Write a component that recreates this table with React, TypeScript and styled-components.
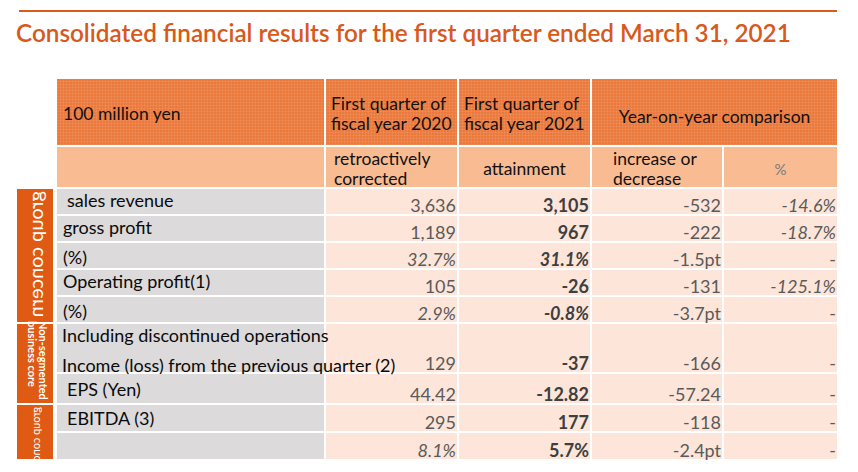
import React from "react";
import styled, { createGlobalStyle } from "styled-components";

const Global = createGlobalStyle`
  html, body { margin: 0; padding: 0; background: #ffffff; }
  body { font-family: Lato, "Liberation Sans", sans-serif; }
`;

const Page = styled.div`
  width: 858px;
  height: 472px;
  overflow: hidden;
  background: #ffffff;
`;

const Rule = styled.div`
  margin: 10px 21px 0 19px;
  height: 2px;
  background: #d85a1c;
`;

const Title = styled.h1`
  margin: 6px 0 0 16px;
  font-family: Lato, "Liberation Sans", sans-serif;
  font-size: 24.3px;
  line-height: 29px;
  font-weight: 600;
  color: #d9581b;
  white-space: nowrap;
`;

const Grid = styled.div`
  display: grid;
  margin: 32px 0 0 17px;
  grid-template-columns: 38px 267px 131px 131px 130px 113px;
  grid-template-rows: 66px 40px 25px 25px 25px 25px 25px 48px 29px 26px 26px;
  column-gap: 2px;
  row-gap: 2px;
  font-family: Lato, "Liberation Sans", sans-serif;
`;

const Spacer = styled.div``;

const HeadCell = styled.div<{ $span?: number; $align?: "left" | "center"; $pad?: number }>`
  grid-column: span ${(p) => p.$span ?? 1};
  background-color: #eb793c;
  background-image: repeating-linear-gradient(0deg, rgba(255, 255, 255, 0.08) 0 1px, transparent 1px 3px),
    repeating-linear-gradient(90deg, rgba(255, 255, 255, 0.08) 0 1px, transparent 1px 3px);
  color: #111111;
  font-size: 17.5px;
  line-height: 20px;
  display: flex;
  flex-direction: column;
  justify-content: center;
  align-items: ${(p) => (p.$align === "center" ? "center" : "flex-start")};
  padding-left: ${(p) => p.$pad ?? 0}px;
  padding-top: ${(p) => (p.$align === "center" ? 10 : 3)}px;
  white-space: nowrap;
`;

const SubCell = styled.div<{ $align?: "left" | "center"; $pad?: number; $muted?: boolean }>`
  background: #f9bb91;
  color: ${(p) => (p.$muted ? "#7a7a7a" : "#111111")};
  font-size: ${(p) => (p.$muted ? 15 : 17.5)}px;
  line-height: 20px;
  display: flex;
  flex-direction: column;
  justify-content: center;
  align-items: ${(p) => (p.$align === "center" ? "center" : "flex-start")};
  padding-left: ${(p) => p.$pad ?? 0}px;
  padding-top: 4px;
  white-space: nowrap;
  overflow: visible;
`;

const SideBlock = styled.div<{ $start: number; $span: number }>`
  grid-column: 1;
  grid-row: ${(p) => p.$start} / span ${(p) => p.$span};
  margin-right: 2px;
  background: #df5a12;
  overflow: hidden;
  display: flex;
  justify-content: center;
`;

const MirrorText = styled.div<{ $size: number }>`
  writing-mode: vertical-rl;
  transform: scaleX(-1);
  color: #ffffff;
  font-size: ${(p) => p.$size}px;
  line-height: 1;
  white-space: nowrap;
  padding-top: 2px;
`;

const SideBlockOpen = styled.div<{ $start: number; $span: number }>`
  grid-column: 1;
  grid-row: ${(p) => p.$start} / span ${(p) => p.$span};
  margin-right: 2px;
  background: #df5a12;
  display: flex;
  justify-content: flex-end;
  padding-right: 4px;
`;

const VerticalText = styled.div`
  writing-mode: vertical-rl;
  color: #ffffff;
  font-size: 11px;
  font-weight: 700;
  line-height: 11px;
  white-space: nowrap;
  margin-top: -3px;
`;

const Label = styled.div<{ $pad: number; $v: "top" | "bottom" | "center" | "split" }>`
  background: #dcdada;
  color: #0a0a0a;
  font-size: 18px;
  line-height: 20px;
  padding-left: ${(p) => p.$pad}px;
  display: flex;
  flex-direction: column;
  gap: 10px;
  justify-content: ${(p) =>
    p.$v === "top" || p.$v === "split" ? "flex-start" : p.$v === "bottom" ? "flex-end" : "center"};
  padding-top: ${(p) => (p.$v === "top" || p.$v === "split" ? 1 : 0)}px;
  padding-bottom: ${(p) => (p.$v === "bottom" ? 1 : 0)}px;
  white-space: nowrap;
  position: relative;
  z-index: 1;
`;

const Num = styled.div<{ $bold?: boolean; $italic?: boolean }>`
  background: #fde6d9;
  color: ${(p) => (p.$bold ? "#3f3f3f" : "#5a5a5a")};
  font-weight: ${(p) => (p.$bold ? 700 : 400)};
  font-style: ${(p) => (p.$italic ? "italic" : "normal")};
  font-size: 18px;
  line-height: 17px;
  display: flex;
  align-items: flex-end;
  justify-content: flex-end;
  padding-right: 1px;
  white-space: nowrap;
`;

type V = { t: string; b?: boolean; i?: boolean };
type Row = { label: string[]; pad: number; v: "top" | "bottom" | "center" | "split"; vals: V[] };

const rows: Row[] = [
  { label: ["sales revenue"], pad: 10, v: "top", vals: [{ t: "3,636" }, { t: "3,105", b: true }, { t: "-532" }, { t: "-14.6%", i: true }] },
  { label: ["gross profit"], pad: 6, v: "top", vals: [{ t: "1,189" }, { t: "967", b: true }, { t: "-222" }, { t: "-18.7%", i: true }] },
  { label: ["(%)"], pad: 6, v: "bottom", vals: [{ t: "32.7%", i: true }, { t: "31.1%", b: true, i: true }, { t: "-1.5pt" }, { t: "-" }] },
  { label: ["Operating profit(1)"], pad: 6, v: "top", vals: [{ t: "105" }, { t: "-26", b: true }, { t: "-131" }, { t: "-125.1%", i: true }] },
  { label: ["(%)"], pad: 6, v: "bottom", vals: [{ t: "2.9%", i: true }, { t: "-0.8%", b: true, i: true }, { t: "-3.7pt" }, { t: "-" }] },
  {
    label: ["Including discontinued operations", "Income (loss) from the previous quarter (2)"],
    pad: 5,
    v: "split",
    vals: [{ t: "129" }, { t: "-37", b: true }, { t: "-166" }, { t: "-" }],
  },
  { label: ["EPS (Yen)"], pad: 10, v: "center", vals: [{ t: "44.42" }, { t: "-12.82", b: true }, { t: "-57.24" }, { t: "-" }] },
  { label: ["EBITDA (3)"], pad: 10, v: "center", vals: [{ t: "295" }, { t: "177", b: true }, { t: "-118" }, { t: "-" }] },
  { label: [], pad: 10, v: "center", vals: [{ t: "8.1%", i: true }, { t: "5.7%", b: true }, { t: "-2.4pt" }, { t: "-" }] },
];

export default function App() {
  return (
    <Page>
      <Global />
      <Rule />
      <Title>Consolidated financial results for the first quarter ended March 31, 2021</Title>
      <Grid>
        <Spacer />
        <HeadCell $pad={6}>100 million yen</HeadCell>
        <HeadCell $pad={5}>
          <span>First quarter of</span>
          <span>fiscal year 2020</span>
        </HeadCell>
        <HeadCell $pad={5}>
          <span>First quarter of</span>
          <span>fiscal year 2021</span>
        </HeadCell>
        <HeadCell $span={2} $align="center">
          Year-on-year comparison
        </HeadCell>

        <Spacer />
        <SubCell />
        <SubCell $pad={8}>
          <span>retroactively</span>
          <span>corrected</span>
        </SubCell>
        <SubCell $align="center">attainment</SubCell>
        <SubCell $pad={21}>
          <span>increase or</span>
          <span>decrease</span>
        </SubCell>
        <SubCell $align="center" $muted>
          %
        </SubCell>

        <SideBlock $start={3} $span={5}>
          <MirrorText $size={20}>group concern</MirrorText>
        </SideBlock>
        <SideBlockOpen $start={8} $span={2}>
          <VerticalText>
            Non-segmented
            <br />
            business core
          </VerticalText>
        </SideBlockOpen>
        <SideBlock $start={10} $span={2}>
          <MirrorText $size={11}>group concern</MirrorText>
        </SideBlock>

        {rows.map((r, idx) => (
          <React.Fragment key={idx}>
            <Label $pad={r.pad} $v={r.v}>
              {r.label.map((l) => (
                <span key={l}>{l}</span>
              ))}
            </Label>
            {r.vals.map((v, j) => (
              <Num key={j} $bold={v.b} $italic={v.i}>
                {v.t}
              </Num>
            ))}
          </React.Fragment>
        ))}
      </Grid>
    </Page>
  );
}
